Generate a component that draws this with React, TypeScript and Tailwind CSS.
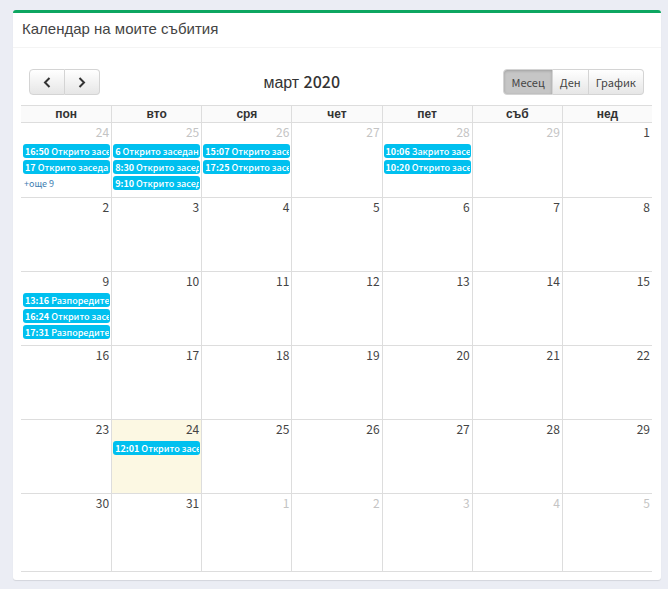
type CalendarEvent = { time: string; title: string };
type Day = { date: number; muted?: boolean; today?: boolean; events?: CalendarEvent[]; more?: number };

const hearing = 'Открито заседание';
const order = 'Разпоредително заседание';
const weekdays = ['пон', 'вто', 'сря', 'чет', 'пет', 'съб', 'нед'];

const plainWeek = (first: number): Day[] => weekdays.map((_, i) => ({ date: first + i }));

const weeks: Day[][] = [
  [
    { date: 24, muted: true, more: 9, events: [{ time: '16:50', title: hearing }, { time: '17', title: hearing }] },
    {
      date: 25,
      muted: true,
      events: [
        { time: '6', title: hearing },
        { time: '8:30', title: hearing },
        { time: '9:10', title: hearing },
      ],
    },
    { date: 26, muted: true, events: [{ time: '15:07', title: hearing }, { time: '17:25', title: hearing }] },
    { date: 27, muted: true },
    { date: 28, muted: true, events: [{ time: '10:06', title: 'Закрито заседание' }, { time: '10:20', title: hearing }] },
    { date: 29, muted: true },
    { date: 1 },
  ],
  plainWeek(2),
  [
    {
      date: 9,
      events: [
        { time: '13:16', title: order },
        { time: '16:24', title: hearing },
        { time: '17:31', title: order },
      ],
    },
    ...plainWeek(10).slice(0, 6),
  ],
  plainWeek(16),
  [{ date: 23 }, { date: 24, today: true, events: [{ time: '12:01', title: hearing }] }, ...plainWeek(25).slice(0, 5)],
  [
    { date: 30 },
    { date: 31 },
    { date: 1, muted: true },
    { date: 2, muted: true },
    { date: 3, muted: true },
    { date: 4, muted: true },
    { date: 5, muted: true },
  ],
];

function EventChip({ event }: { event: CalendarEvent }) {
  return (
    <a
      href="#event"
      className="block h-[14px] overflow-hidden rounded-[3px] bg-[#00c0ef] pr-px pl-[2px] text-[9px] leading-[15px] font-medium whitespace-nowrap text-white"
    >
      <span className="block overflow-hidden">
        <span className="font-bold">{event.time}</span> {event.title}
      </span>
    </a>
  );
}

function DayCell({ day }: { day: Day }) {
  return (
    <td
      className={`border-b border-l border-[#ddd] p-0 align-top first:border-l-0 first:pl-px ${day.today ? 'bg-[#fcf8e3]' : ''}`}
    >
      <div className={`pr-[2px] text-right text-[12px] leading-[18px] ${day.muted ? 'text-[#c4c4c4]' : 'text-[#444]'}`}>
        {day.date}
      </div>
      <div className="mt-[3px] flex flex-col gap-[2px] px-px">
        {day.events?.map((event) => <EventChip key={event.time} event={event} />)}
        {day.more && (
          <a href="#more" className="px-[1px] text-[9px] leading-[15px] text-[#3c7db0]">
            +още {day.more}
          </a>
        )}
      </div>
    </td>
  );
}

function Chevron({ path }: { path: string }) {
  return (
    <svg width="8" height="11" viewBox="0 0 8 11" fill="none" stroke="#333" strokeWidth="2" aria-hidden="true">
      <path d={path} />
    </svg>
  );
}

const buttonBase = 'border-[#d4d4d4] text-[11px] leading-[23px] text-[#444]';
const lightFill = 'bg-linear-to-b from-white to-[#e6e6e6]';

export default function App() {
  return (
    <div className="min-h-screen bg-[#ebedf4] pt-[10px] pr-[7px] pb-[9px] pl-[13px] font-['Noto_Sans_CJK_SC','Noto_Sans',sans-serif]">
      <section className="rounded-[3px] border-t-3 border-[#0da661] bg-white pb-[8px] shadow-[0_1px_1px_rgba(0,0,0,0.1)]">
        <header className="border-b border-[#f4f4f4] px-[9px] pt-[4px] pb-[6px]">
          <h3 className="font-['Liberation_Sans',sans-serif] text-[15px] leading-[24px] text-[#444]">
            Календар на моите събития
          </h3>
        </header>
        <div className="pt-[20px] pr-[9px] pl-[8px]">
          <div className="mb-[9px] flex items-center justify-between px-[8px]">
            <div className="flex">
              <button
                type="button"
                aria-label="Предишен месец"
                className={`flex h-[26px] w-[36px] items-center justify-center rounded-l-[4px] border ${buttonBase} ${lightFill}`}
              >
                <Chevron path="M6.5 1 2 5.5 6.5 10" />
              </button>
              <button
                type="button"
                aria-label="Следващ месец"
                className={`flex h-[26px] w-[35px] items-center justify-center rounded-r-[4px] border border-l-0 ${buttonBase} ${lightFill}`}
              >
                <Chevron path="M1.5 1 6 5.5 1.5 10" />
              </button>
            </div>
            <h2 className="font-['Liberation_Sans',sans-serif] text-[16px] leading-[26px] text-[#333]">
              март <span className="font-['Noto_Sans_CJK_SC',sans-serif] font-medium">2020</span>
            </h2>
            <div className="flex">
              <button
                type="button"
                aria-pressed="true"
                className={`h-[26px] rounded-l-[4px] border bg-[#c6c6c6] px-[7px] shadow-[inset_0_1px_3px_rgba(0,0,0,0.2)] ${buttonBase}`}
              >
                Месец
              </button>
              <button type="button" className={`h-[26px] border-y border-r px-[7px] ${buttonBase} ${lightFill}`}>
                Ден
              </button>
              <button type="button" className={`h-[26px] rounded-r-[4px] border border-l-0 px-[7px] ${buttonBase} ${lightFill}`}>
                График
              </button>
            </div>
          </div>
          <table className="w-full table-fixed border-separate border-spacing-0">
            <thead>
              <tr className="h-[18px]">
                {weekdays.map((name) => (
                  <th
                    key={name}
                    scope="col"
                    className="border-y border-l border-[#ddd] bg-[#fafafa] p-0 text-center font-['Liberation_Sans',sans-serif] text-[12px] leading-[16px] font-bold text-[#333] first:border-l-0"
                  >
                    {name}
                  </th>
                ))}
              </tr>
            </thead>
            <tbody>
              {weeks.map((week, i) => (
                <tr key={i} className="h-[74px] first:h-[75px] last:h-[78px]">
                  {week.map((day) => (
                    <DayCell key={day.date} day={day} />
                  ))}
                </tr>
              ))}
            </tbody>
          </table>
        </div>
      </section>
    </div>
  );
}
